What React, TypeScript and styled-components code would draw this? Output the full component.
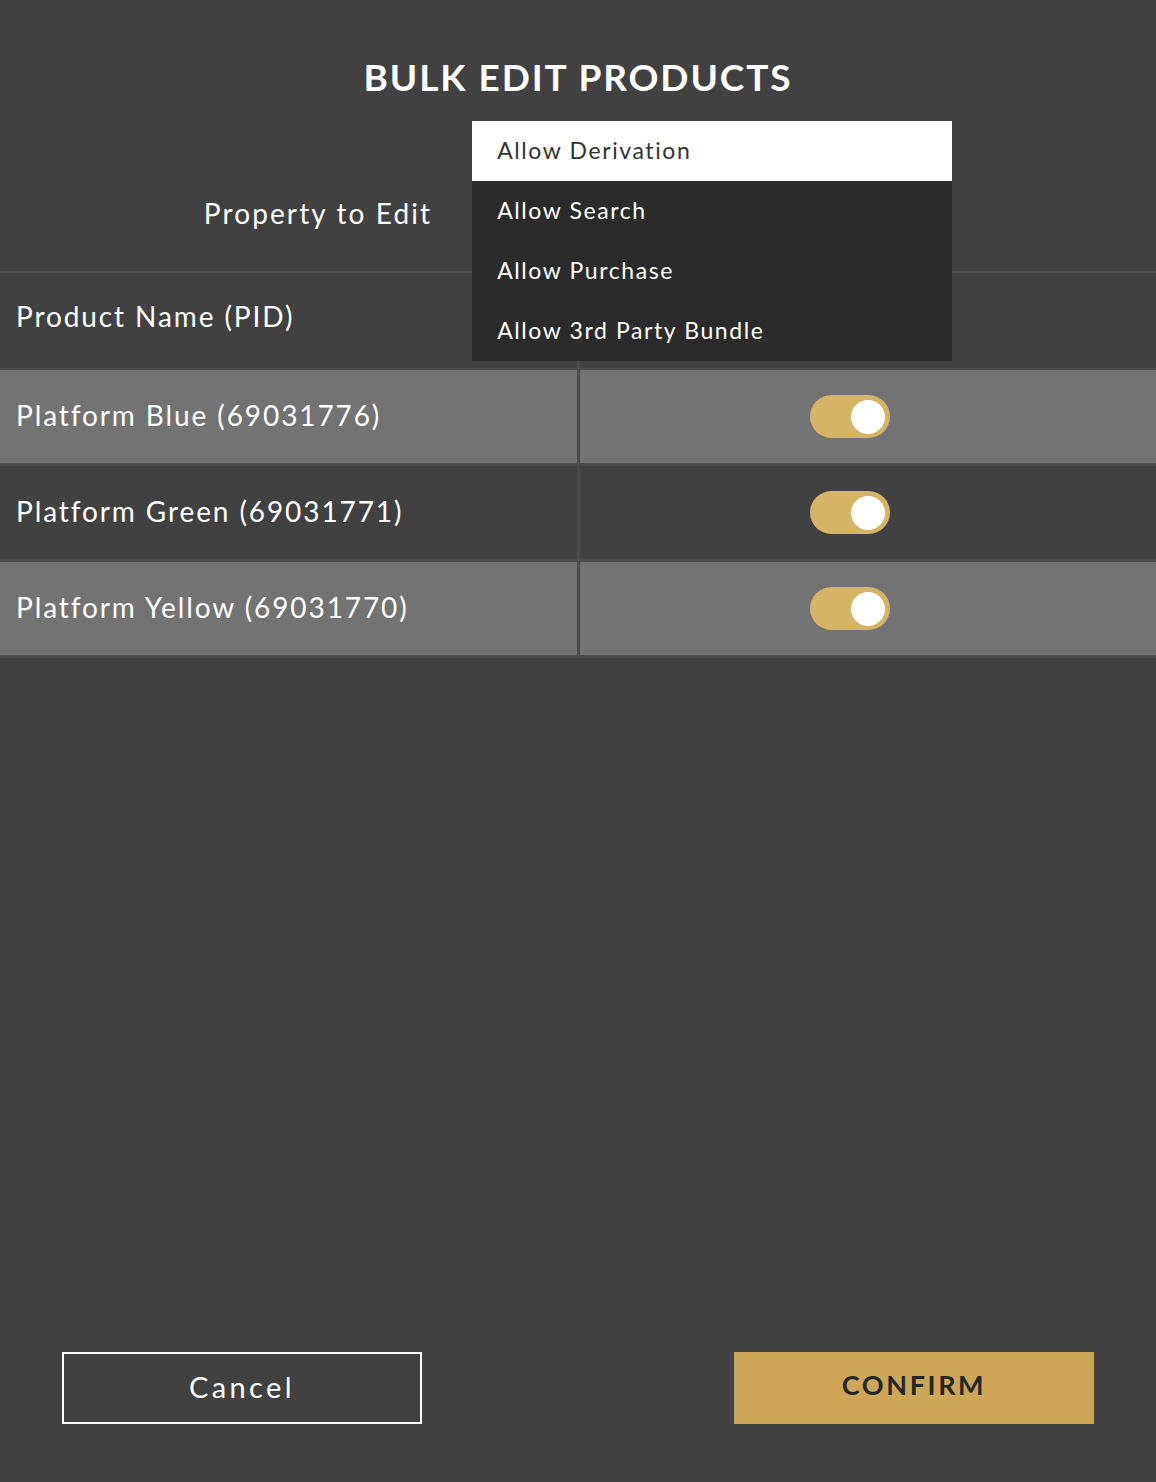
import { useState } from "react";
import styled, { createGlobalStyle } from "styled-components";

const GlobalStyle = createGlobalStyle`
  html, body {
    margin: 0;
    padding: 0;
    background: #414141;
  }
  body {
    font-family: "Lato", "Noto Sans", sans-serif;
    color: #ffffff;
  }
`;

const products = [
  { name: "Platform Blue", pid: "69031776", enabled: true },
  { name: "Platform Green", pid: "69031771", enabled: true },
  { name: "Platform Yellow", pid: "69031770", enabled: true },
];

const properties = ["Allow Derivation", "Allow Search", "Allow Purchase", "Allow 3rd Party Bundle"];

const Page = styled.div`
  display: flex;
  flex-direction: column;
  min-height: 1482px;
  background: #414141;
`;

const Header = styled.div`
  border-bottom: 2px solid #525252;
`;

const Title = styled.h1`
  margin: 0;
  padding-top: 55px;
  text-align: center;
  font-size: 37px;
  line-height: 44px;
  font-weight: 700;
  letter-spacing: 1.9px;
  color: #ffffff;
`;

const PropertyRow = styled.div`
  display: flex;
  justify-content: center;
  align-items: center;
  gap: 40px;
  padding: 94px 0 38px;
`;

const Label = styled.div`
  font-size: 28px;
  line-height: 40px;
  letter-spacing: 2.1px;
`;

const SelectWrap = styled.div`
  position: relative;
  width: 480px;
  height: 40px;
`;

const Menu = styled.ul`
  position: absolute;
  top: -72px;
  left: 0;
  width: 480px;
  margin: 0;
  padding: 0;
  list-style: none;
  background: #2b2b2b;
  z-index: 10;
`;

const MenuItem = styled.li<{ $active?: boolean }>`
  height: 60px;
  display: flex;
  align-items: center;
  padding: 0 0 2px 25px;
  box-sizing: border-box;
  font-size: 23px;
  letter-spacing: 1.6px;
  background: ${(p) => (p.$active ? "#ffffff" : "transparent")};
  color: ${(p) => (p.$active ? "#333333" : "#ffffff")};
  cursor: pointer;
`;

const Table = styled.div`
  display: flex;
  flex-direction: column;
`;

const Row = styled.div<{ $tone: "header" | "light" | "dark" }>`
  display: grid;
  grid-template-columns: 580px 1fr;
  height: 93px;
  border-bottom: 3px solid #4b4b4b;
  background: ${(p) => (p.$tone === "light" ? "#737373" : "#414141")};
  ${(p) => p.$tone === "header" && "height: 95px; border-bottom-width: 2px;"}
`;

const NameCell = styled.div<{ $header?: boolean }>`
  display: flex;
  align-items: center;
  padding: 0 0 ${(p) => (p.$header ? "10px" : "4px")} 16px;
  font-size: 28px;
  letter-spacing: 1.9px;
  border-right: 3px solid #4b4b4b;
`;

const ToggleCell = styled.div`
  display: flex;
  align-items: center;
  justify-content: center;
  padding-right: 36px;
`;

const Toggle = styled.button<{ $on: boolean }>`
  position: relative;
  width: 80px;
  height: 43px;
  border: none;
  padding: 0;
  border-radius: 22px;
  background: ${(p) => (p.$on ? "#d4b465" : "#8a8a8a")};
  cursor: pointer;

  &::after {
    content: "";
    position: absolute;
    top: 4.5px;
    left: ${(p) => (p.$on ? "41px" : "5px")};
    width: 34px;
    height: 34px;
    border-radius: 50%;
    background: #ffffff;
  }
`;

const Spacer = styled.div`
  flex: 1;
`;

const Footer = styled.div`
  display: flex;
  justify-content: space-between;
  padding: 0 62px 58px;
`;

const CancelButton = styled.button`
  width: 360px;
  height: 72px;
  background: transparent;
  border: 2px solid #ffffff;
  color: #ffffff;
  font-family: "Lato", "Noto Sans", sans-serif;
  font-size: 29px;
  letter-spacing: 3.4px;
  padding: 0 0 4px;
  cursor: pointer;
`;

const ConfirmButton = styled.button`
  width: 360px;
  height: 72px;
  background: #cda757;
  border: none;
  color: #262626;
  font-family: "Lato", "Noto Sans", sans-serif;
  font-size: 27px;
  font-weight: 700;
  letter-spacing: 2.6px;
  padding: 0 0 8px;
  cursor: pointer;
`;

export default function App() {
  const [selected, setSelected] = useState(0);
  const [rows, setRows] = useState(products);

  const flip = (i: number) =>
    setRows((r) => r.map((row, j) => (j === i ? { ...row, enabled: !row.enabled } : row)));

  return (
    <>
      <GlobalStyle />
      <Page>
        <Header>
          <Title>BULK EDIT PRODUCTS</Title>
          <PropertyRow>
            <Label>Property to Edit</Label>
            <SelectWrap>
              <Menu>
                {properties.map((p, i) => (
                  <MenuItem key={p} $active={i === selected} onClick={() => setSelected(i)}>
                    {p}
                  </MenuItem>
                ))}
              </Menu>
            </SelectWrap>
          </PropertyRow>
        </Header>
        <Table>
          <Row $tone="header">
            <NameCell $header>Product Name (PID)</NameCell>
            <ToggleCell />
          </Row>
          {rows.map((row, i) => (
            <Row key={row.pid} $tone={i % 2 === 0 ? "light" : "dark"}>
              <NameCell>
                {row.name} ({row.pid})
              </NameCell>
              <ToggleCell>
                <Toggle $on={row.enabled} onClick={() => flip(i)} aria-label="toggle" />
              </ToggleCell>
            </Row>
          ))}
        </Table>
        <Spacer />
        <Footer>
          <CancelButton>Cancel</CancelButton>
          <ConfirmButton>CONFIRM</ConfirmButton>
        </Footer>
      </Page>
    </>
  );
}
